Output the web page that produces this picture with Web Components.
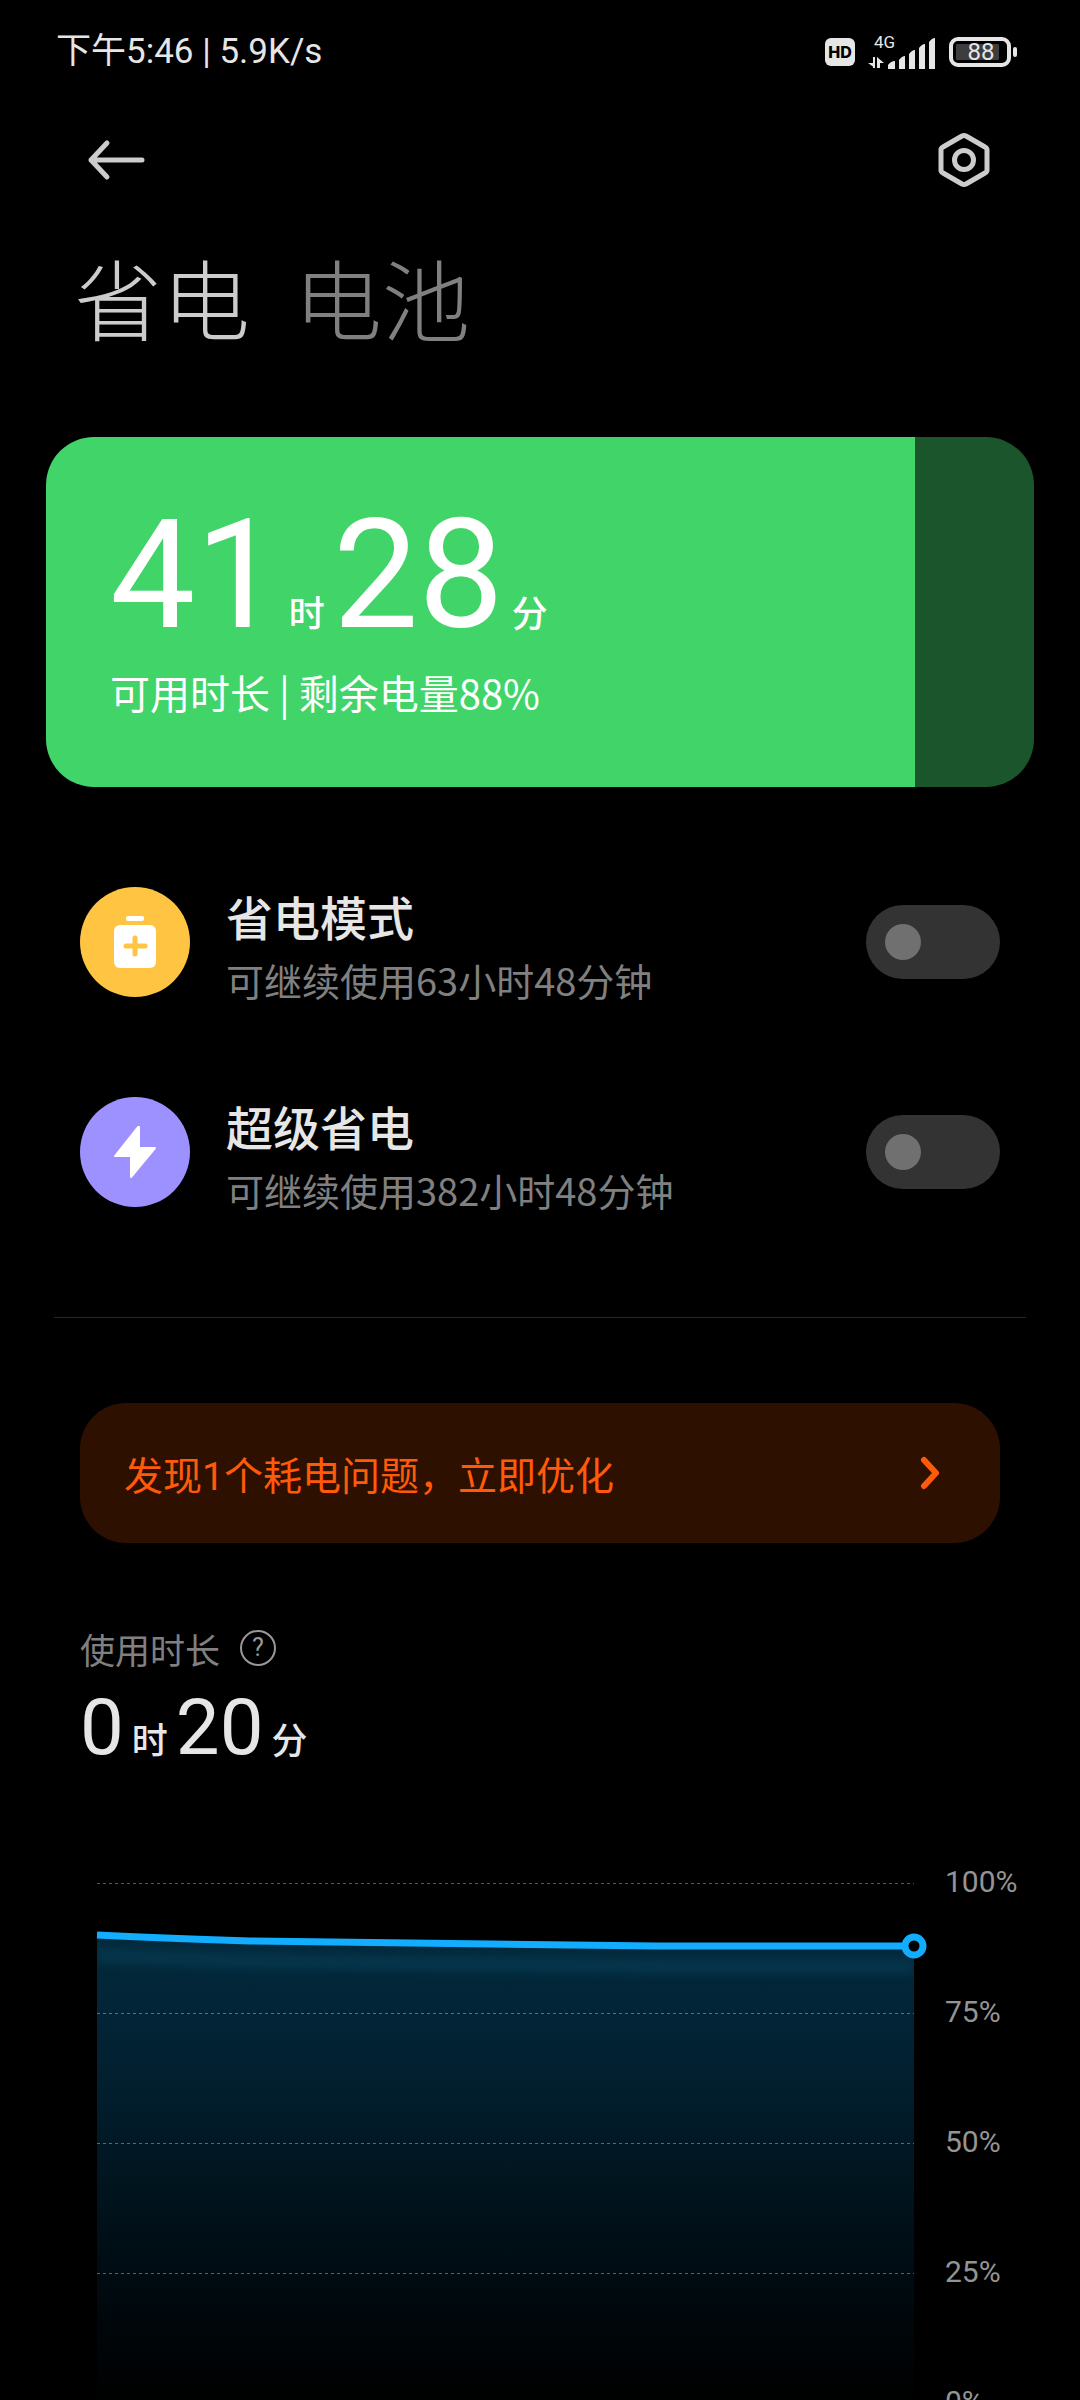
<!DOCTYPE html>
<html lang="zh-CN">
<head>
<meta charset="utf-8">
<meta name="viewport" content="width=device-width, initial-scale=1">
<title>省电与电池</title>
<style>
    html, body { margin: 0; background: #000; }
    body {
        height: 100vh;
        overflow-y: auto;
        scrollbar-width: none;
        font-family: Roboto, "Noto Sans CJK SC", sans-serif;
        color: #e6e6e6;
    }
</style>
</head>
<body>
<battery-app></battery-app>

<script>
class Base_Element extends HTMLElement {
    constructor() {
        super()
        const template = document.createElement('template')
        template.innerHTML = this.render()
        this.attachShadow({ mode: 'open' })
        this.shadowRoot.appendChild( template.content.cloneNode(true) )
    }
}

//===[ Status bar ]========================================================

class Status_Bar extends Base_Element {
    render() {
        return `
            <style>
                :host {
                    display: flex;
                    align-items: center;
                    justify-content: space-between;
                    height: 104px;
                    padding: 0 62px 0 56px;
                }
                .clock { font-size: 35px; line-height: 48px; }
                .icons { display: flex; align-items: center; gap: 13px; }
                .hd {
                    width: 30px;
                    height: 28px;
                    border-radius: 6px;
                    background: #e6e6e6;
                    color: #000;
                    font: 800 16px/28px Inter, sans-serif;
                    text-align: center;
                }
                svg { display: block; }
                .battery { display: grid; align-items: center; }
                .battery > * { grid-area: 1 / 1; }
                .battery span { width: 64px; font-size: 24px; line-height: 30px; text-align: center; }
            </style>
            <span class="clock">下午5:46 | 5.9K/s</span>
            <div class="icons">
                <span class="hd">HD</span>
                <svg width="68" height="46" viewBox="0 -6 68 46" fill="#e6e6e6">
                    <text x="6" y="13" font-size="17">4G</text>
                    <path d="M5 22v11H7V22zM0 28l7 5V22H5v6zM9 22v11h3v-5h4z"/>
                    <path d="M20 30q3-4 7-4v8h-7zM31 25q3-4 6-4v13h-6zM41 19q3-4 6-4v19h-6zM51 13q3-4 6-4v25h-6zM61 7q3-4 6-4v31h-6z"/>
                </svg>
                <div class="battery">
                    <svg width="69" height="30" viewBox="0 0 69 30">
                        <rect x="2" y="2" width="58" height="26" rx="7" fill="none" stroke="#e6e6e6" stroke-width="4"/>
                        <rect x="7" y="7" width="43" height="16" rx="1" fill="#3d3d3d"/>
                        <rect x="64" y="10" width="4" height="10" rx="2" fill="#e6e6e6"/>
                    </svg>
                    <span>88</span>
                </div>
            </div>
        `
    }
}

//===[ Header ]============================================================

class Nav_Bar extends Base_Element {
    render() {
        return `
            <style>
                :host {
                    display: flex;
                    align-items: center;
                    justify-content: space-between;
                    height: 112px;
                    padding: 0 86px 0 85px;
                }
                button { padding: 0; border: 0; background: none; color: #ccc; }
                svg { display: block; fill: none; stroke: currentColor; stroke-width: 5; stroke-linecap: round; stroke-linejoin: round; }
            </style>
            <button aria-label="返回">
                <svg width="60" height="60" viewBox="0 0 60 60"><path d="M57 30H6M22 13L6 30l16 17"/></svg>
            </button>
            <button aria-label="设置">
                <svg width="60" height="60" viewBox="0 0 60 60">
                    <path d="M28 6q2-1 4 0l19 11q2 1 2 3v20q0 2-2 3L32 54q-2 1-4 0L9 43q-2-1-2-3V20q0-2 2-3z"/>
                    <circle cx="30" cy="30" r="9.5"/>
                </svg>
            </button>
        `
    }
}

class Page_Tabs extends Base_Element {
    render() {
        return `
            <style>
                :host { display: flex; gap: 44px; padding: 28px 74px 4px; }
                button {
                    padding: 0;
                    border: 0;
                    background: none;
                    color: #808080;
                    font: 300 88px/104px "Noto Sans CJK SC", sans-serif;
                }
                button[aria-selected=true] { color: #ccc; }
            </style>
            <button role="tab" aria-selected="true">省电</button>
            <button role="tab" aria-selected="false">电池</button>
        `
    }
}

//===[ Duration ]==========================================================

// hours and minutes, big digits with small units
class Time_Value extends Base_Element {
    static get observedAttributes() { return ['hours', 'minutes'] }

    render() {
        return `
            <style>
                :host { display: flex; align-items: baseline; font-size: 78px; line-height: 1; }
                small { font-size: 36px; font-weight: 500; margin: 0 8px; }
            </style>
            <span id="hours"></span><small>时</small><span id="minutes"></span><small>分</small>
        `
    }

    attributeChangedCallback(name, _, value) {
        this.shadowRoot.getElementById(name).textContent = value
    }
}

class Battery_Card extends Base_Element {
    render() {
        return `
            <style>
                :host {
                    display: block;
                    box-sizing: border-box;
                    min-height: 350px;
                    margin: 85px 46px 0;
                    padding: 62px 64px 56px;
                    border-radius: 48px;
                    background: linear-gradient(90deg, #41d469 var(--level), #1b552b var(--level));
                    color: #fff;
                }
                time-value { font-size: 152px; }
                p { margin: 11px 0 0; font: 40px/60px "Noto Sans CJK SC", sans-serif; }
            </style>
            <time-value hours="41" minutes="28"></time-value>
            <p><slot></slot></p>
        `
    }

    connectedCallback() {
        this.style.setProperty('--level', this.getAttribute('level') + '%')
    }
}

//===[ Power modes ]=======================================================

class Mode_Row extends Base_Element {
    render() {
        return `
            <style>
                :host { display: block; }
                label { display: flex; align-items: center; height: 110px; }
                .icon { width: 110px; height: 110px; border-radius: 50%; background: var(--tint); }
                .text { flex: 1; padding: 16px 0 0 36px; }
                .title { display: block; font-size: 47px; font-weight: 500; line-height: 60px; }
                .note { display: block; font: 38px/60px "Noto Sans CJK SC", sans-serif; color: #808080; }
                input {
                    appearance: none;
                    width: 134px;
                    height: 74px;
                    margin: 0;
                    padding: 19px;
                    box-sizing: border-box;
                    border-radius: 37px;
                    background: #333;
                }
                input::before { content: ""; display: block; width: 36px; height: 36px; border-radius: 50%; background: #707070; }
                input:checked { background: #41d469; }
                input:checked::before { margin-left: auto; background: #fff; }
            </style>
            <label>
                <span class="icon"><slot name="icon"></slot></span>
                <span class="text">
                    <span class="title"><slot></slot></span>
                    <span class="note"><slot name="note"></slot></span>
                </span>
                <input type="checkbox" role="switch">
            </label>
        `
    }
}

class Issue_Link extends Base_Element {
    render() {
        return `
            <style>
                :host { display: block; }
                a {
                    display: flex;
                    align-items: center;
                    justify-content: space-between;
                    height: 140px;
                    padding: 0 58px 0 44px;
                    border-radius: 46px;
                    background: #2d1000;
                    color: #ff5a0a;
                    font-size: 39px;
                    text-decoration: none;
                }
            </style>
            <a href="#optimize">
                <span><slot></slot></span>
                <svg width="24" height="34" viewBox="0 0 24 34" fill="none" stroke="currentColor" stroke-width="6" stroke-linecap="round" stroke-linejoin="round"><path d="M6 4l12 13L6 30"/></svg>
            </a>
        `
    }
}

//===[ Usage ]=============================================================

class Usage_Summary extends Base_Element {
    render() {
        return `
            <style>
                :host { display: block; }
                .head { display: flex; align-items: center; gap: 20px; height: 50px; font-size: 35px; color: #808080; }
                button {
                    width: 36px;
                    height: 36px;
                    padding: 0;
                    border: 2px solid #999;
                    border-radius: 50%;
                    background: none;
                    color: #999;
                    font: 25px/32px Roboto, sans-serif;
                }
                time-value { margin-top: 16px; }
            </style>
            <div class="head"><span>使用时长</span><button aria-label="说明">?</button></div>
            <time-value hours="0" minutes="20"></time-value>
        `
    }
}

class Level_Chart extends Base_Element {
    render() {
        return `
            <style>
                :host { display: grid; grid-template-columns: 1fr 135px; gap: 31px; }
                svg { display: block; width: 100%; height: 540px; overflow: visible; }
                .grid line { stroke: #fff; stroke-opacity: .35; stroke-dasharray: 3 3; }
                .scale { display: grid; grid-auto-rows: 130px; font-size: 30px; line-height: 38px; color: #949494; }
            </style>
            <svg viewBox="0 0 817 540" preserveAspectRatio="none">
                <defs>
                    <linearGradient id="area" x1="0" y1="72" x2="0" y2="540" gradientUnits="userSpaceOnUse">
                        <stop offset="0" stop-color="#032a3d"/>
                        <stop offset=".25" stop-color="#022233"/>
                        <stop offset=".5" stop-color="#011621"/>
                        <stop offset=".75" stop-color="#000a10"/>
                        <stop offset="1" stop-color="#000"/>
                    </linearGradient>
                    <filter id="soft" x="-5%" y="-200%" width="110%" height="500%" color-interpolation-filters="sRGB"><feGaussianBlur stdDeviation="5"/></filter>
                    <clipPath id="inside"><path d="M0 72Q60 75 153 78L560 83H817V540H0z"/></clipPath>
                </defs>
                <path fill="url(#area)" d="M0 72Q60 75 153 78L560 83H817V540H0z"/>
                <g clip-path="url(#inside)">
                    <path d="M0 92Q60 95 153 98L560 103H817" fill="none" stroke="#06364c" stroke-width="14" filter="url(#soft)"/>
                </g>
                <g class="grid">
                    <line x2="817" y1="20.5" y2="20.5"/>
                    <line x2="817" y1="150.5" y2="150.5"/>
                    <line x2="817" y1="280.5" y2="280.5"/>
                    <line x2="817" y1="410.5" y2="410.5"/>
                </g>
                <path d="M0 72Q60 75 153 78L560 83H817" fill="none" stroke="#12adff" stroke-width="7"/>
                <circle cx="817" cy="83" r="9" fill="#000" stroke="#12adff" stroke-width="7"/>
            </svg>
            <div class="scale">
                <span>100%</span>
                <span>75%</span>
                <span>50%</span>
                <span>25%</span>
                <span>0%</span>
            </div>
        `
    }
}

//===[ Page ]==============================================================

class Battery_App extends Base_Element {
    render() {
        return `
            <style>
                :host { display: block; }
                svg { display: block; }
                .modes { display: grid; gap: 100px; margin: 100px 80px 0; }
                hr { height: 1px; margin: 110px 54px 85px; border: 0; background: #262626; }
                issue-link { margin: 0 80px; }
                usage-summary { margin: 80px 80px 0; }
                level-chart { margin: 96px 0 0 97px; }
            </style>
            <status-bar></status-bar>
            <nav-bar></nav-bar>
            <page-tabs role="tablist"></page-tabs>
            <main>
                <battery-card level="88">可用时长 | 剩余电量88%</battery-card>
                <div class="modes">
                    <mode-row style="--tint: #ffc542">
                        <svg slot="icon" width="110" height="110" viewBox="0 0 110 110">
                            <rect x="46" y="29" width="18" height="5" rx="2" fill="#fff"/>
                            <rect x="34" y="38" width="42" height="43" rx="6" fill="#fff"/>
                            <path d="M55 51v16M46 59h19" stroke="#ffc542" stroke-width="5" stroke-linecap="round"/>
                        </svg>
                        省电模式
                        <span slot="note">可继续使用63小时48分钟</span>
                    </mode-row>
                    <mode-row style="--tint: #9d91ff">
                        <svg slot="icon" width="110" height="110" viewBox="0 0 110 110">
                            <path d="M58 30L35 59h16v21l24-29H59V30z" fill="#fff" stroke="#fff" stroke-width="2" stroke-linejoin="round"/>
                        </svg>
                        超级省电
                        <span slot="note">可继续使用382小时48分钟</span>
                    </mode-row>
                </div>
                <hr>
                <issue-link>发现1个耗电问题，立即优化</issue-link>
                <usage-summary></usage-summary>
                <level-chart></level-chart>
            </main>
        `
    }
}

customElements.define('status-bar', Status_Bar)
customElements.define('nav-bar', Nav_Bar)
customElements.define('page-tabs', Page_Tabs)
customElements.define('time-value', Time_Value)
customElements.define('battery-card', Battery_Card)
customElements.define('mode-row', Mode_Row)
customElements.define('issue-link', Issue_Link)
customElements.define('usage-summary', Usage_Summary)
customElements.define('level-chart', Level_Chart)
customElements.define('battery-app', Battery_App)
</script>
</body>
</html>
